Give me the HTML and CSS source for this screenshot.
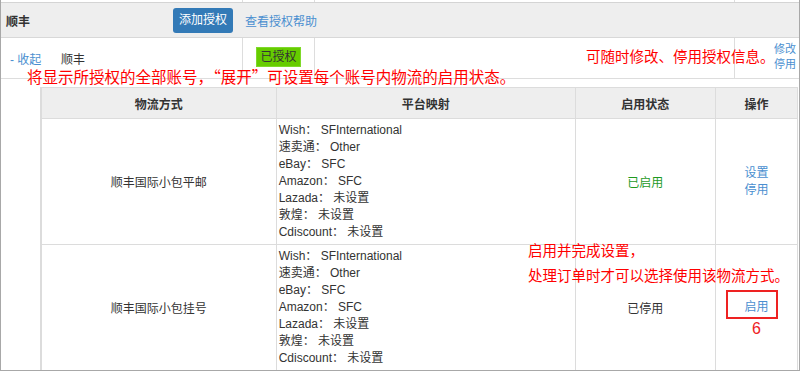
FILE: index.html
```html
<!DOCTYPE html>
<html>
<head>
<meta charset="UTF-8">
<title>顺丰授权</title>
<link rel="stylesheet" href="styles.css">
</head>
<body>
	<div class="frame">
		<div class="prev-row">
			<div class="c1"></div>
			<div class="c2"></div>
			<div class="c3"></div>
			<div class="c4"></div>
		</div>
		<div class="title-row">
			<span class="title">顺丰</span>
			<a class="btn-add">添加授权</a>
			<a class="help-link">查看授权帮助</a>
		</div>
		<div class="account-row">
			<div class="c1">
				<a class="toggle">- 收起</a>
				<span class="acct-name">顺丰</span>
			</div>
			<div class="c2"><span class="badge">已授权</span></div>
			<div class="c3"></div>
			<div class="c4 ops-small">
				<a>修改</a>
				<a>停用</a>
			</div>
		</div>
		<div class="detail">
			<table class="ship-table">
				<colgroup>
					<col class="w-name">
					<col class="w-map">
					<col class="w-state">
					<col class="w-op">
				</colgroup>
				<thead>
					<tr>
						<th>物流方式</th>
						<th>平台映射</th>
						<th>启用状态</th>
						<th>操作</th>
					</tr>
				</thead>
				<tbody>
					<tr>
						<td class="center">顺丰国际小包平邮</td>
						<td class="map">
							<div>Wish： SFInternational</div>
							<div>速卖通： Other</div>
							<div>eBay： SFC</div>
							<div>Amazon： SFC</div>
							<div>Lazada： 未设置</div>
							<div>敦煌： 未设置</div>
							<div>Cdiscount： 未设置</div>
						</td>
						<td class="center on">已启用</td>
						<td class="center ops"><a>设置</a><a>停用</a></td>
					</tr>
					<tr>
						<td class="center">顺丰国际小包挂号</td>
						<td class="map">
							<div>Wish： SFInternational</div>
							<div>速卖通： Other</div>
							<div>eBay： SFC</div>
							<div>Amazon： SFC</div>
							<div>Lazada： 未设置</div>
							<div>敦煌： 未设置</div>
							<div>Cdiscount： 未设置</div>
						</td>
						<td class="center">已停用</td>
						<td class="center ops"><a>启用</a></td>
					</tr>
				</tbody>
			</table>
		</div>

		<!-- red notes drawn over the page -->
		<div class="note note-expand">将显示所授权的全部账号，“展开”可设置每个账号内物流的启用状态。</div>
		<div class="note note-edit">可随时修改、停用授权信息。</div>
		<div class="note note-enable">启用并完成设置，<br>处理订单时才可以选择使用该物流方式。</div>
		<div class="mark-box"></div>
		<div class="note note-num">6</div>
	</div>
</body>
</html>
```

FILE: styles.css
```css
html, body {
	margin: 0;
	padding: 0;
	background: #fff;
}

body {
	font-family: "Liberation Sans", Arial, "Noto Sans CJK SC", sans-serif;
	font-size: 12px;
	color: #333;
}

a {
	color: #4a8fd0;
	text-decoration: none;
}

.frame {
	position: relative;
	width: 798px;
	height: 370px;
	border-left: 1px solid #a8a8a8;
	border-right: 1px solid #a8a8a8;
	border-bottom: 1px solid #a8a8a8;
	overflow: hidden;
}

.prev-row {
	display: grid;
	grid-template-columns: 242px 72px 420px 1fr;
	height: 2px;
	border-bottom: 1px solid #d4d4d4;
}

.prev-row .c1,
.prev-row .c2,
.prev-row .c3 {
	border-right: 1px solid #ddd;
}

.title-row {
	display: flex;
	align-items: center;
	height: 34px;
	background: #eeeeee;
	border-bottom: 1px solid #d8d8d8;
}

.title {
	font-weight: bold;
	margin-left: 5px;
	width: 167px;
}

.btn-add {
	display: inline-block;
	width: 60px;
	height: 25px;
	line-height: 25px;
	text-align: center;
	color: #fff;
	background: #337ab7;
	border-radius: 3px;
	margin-right: 12px;
}

.account-row {
	display: grid;
	grid-template-columns: 242px 72px 420px 1fr;
	height: 40px;
	border-bottom: 1px solid #dddddd;
}

.account-row > div {
	display: flex;
	align-items: center;
}

.account-row .c1,
.account-row .c2,
.account-row .c3 {
	border-right: 1px solid #dddddd;
}

.toggle {
	margin-left: 9px;
	width: 51px;
}

.account-row .c2 {
	justify-content: center;
	padding-bottom: 2px;
	box-sizing: border-box;
}

.badge {
	display: inline-block;
	background: #66cc00;
	border: 1px solid #7fd92a;
	color: #333;
	padding: 0 3px;
	height: 18px;
	line-height: 18px;
}

.ops-small {
	flex-direction: column;
	align-items: flex-end !important;
	justify-content: center;
	padding-right: 3px;
	font-size: 11px;
	line-height: 15px;
	padding-bottom: 2px;
}

.detail {
	padding: 8px 0 0 39px;
}

.ship-table {
	width: 758px;
	border-collapse: collapse;
	table-layout: fixed;
	border-left: 2px solid #dcdcdc;
}

col.w-name { width: 235px; }
col.w-map { width: 299px; }
col.w-state { width: 140px; }
col.w-op { width: 82px; }

.ship-table th,
.ship-table td {
	border: 1px solid #dcdcdc;
	padding: 0;
}

.ship-table th {
	background: #eeeeee;
	height: 30px;
	font-weight: bold;
	text-align: center;
}

.ship-table td {
	height: 125px;
	vertical-align: middle;
}

.center {
	text-align: center;
}

.map {
	padding-left: 2px !important;
	line-height: 17px;
}

.on {
	color: #1f9a1f;
}

.ops a {
	display: block;
	line-height: 17px;
}

.note {
	position: absolute;
	color: #ff0000;
	font-family: "Noto Sans CJK SC", sans-serif;
	font-size: 15.5px;
	line-height: 18px;
	white-space: nowrap;
}

.note-expand {
	left: 26px;
	top: 67px;
}

.note-edit {
	left: 585px;
	top: 47px;
	font-size: 14.5px;
}

.note-enable {
	left: 527px;
	top: 237px;
	font-size: 14.5px;
	line-height: 25px;
}

.mark-box {
	position: absolute;
	left: 725px;
	top: 290px;
	width: 48px;
	height: 25px;
	border: 2px solid #ee2222;
}

.note-num {
	left: 751px;
	top: 320px;
	font-family: "Liberation Sans", sans-serif;
	font-size: 16px;
	color: #ee2222;
}
```
